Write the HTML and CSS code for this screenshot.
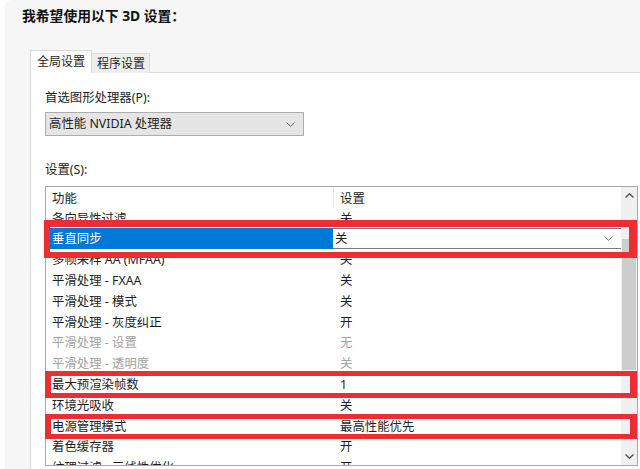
FILE: index.html
```html
<!DOCTYPE html>
<html lang="zh-CN">
<head>
<meta charset="utf-8">
<link rel="stylesheet" href="styles.css">
</head>
<body>
<div class="window">
  <div class="title">我希望使用以下 3D 设置：</div>
  <div class="tabs">
    <div class="tab active">全局设置</div>
    <div class="tab">程序设置</div>
  </div>
  <div class="panel">
    <div class="label first">首选图形处理器(P):</div>
    <div class="select">
      <span>高性能 NVIDIA 处理器</span>
      <svg class="chev" width="9" height="5" viewBox="0 0 9 5"><path d="M0.5 0.5 L4.5 4.3 L8.5 0.5" fill="none" stroke="#606060" stroke-width="1"/></svg>
    </div>
    <div class="label second">设置(S):</div>
    <div class="list-wrap">
      <div class="list">
        <div class="grid">
          <div class="row head"><div class="c1">功能</div><div class="c2">设置</div></div>
          <div class="row"><div class="c1">各向异性过滤</div><div class="c2">关</div></div>
          <div class="row selected">
            <div class="c1">垂直同步</div>
            <div class="c2 combo"><span>关</span>
              <svg class="chev" width="9" height="5" viewBox="0 0 9 5"><path d="M0.5 0.5 L4.5 4.3 L8.5 0.5" fill="none" stroke="#707070" stroke-width="1"/></svg>
            </div>
          </div>
          <div class="row"><div class="c1">多帧采样 AA (MFAA)</div><div class="c2">关</div></div>
          <div class="row"><div class="c1">平滑处理 - FXAA</div><div class="c2">关</div></div>
          <div class="row"><div class="c1">平滑处理 - 模式</div><div class="c2">关</div></div>
          <div class="row"><div class="c1">平滑处理 - 灰度纠正</div><div class="c2">开</div></div>
          <div class="row dim"><div class="c1">平滑处理 - 设置</div><div class="c2">无</div></div>
          <div class="row dim"><div class="c1">平滑处理 - 透明度</div><div class="c2">关</div></div>
          <div class="row"><div class="c1">最大预渲染帧数</div><div class="c2">1</div></div>
          <div class="row"><div class="c1">环境光吸收</div><div class="c2">关</div></div>
          <div class="row"><div class="c1">电源管理模式</div><div class="c2">最高性能优先</div></div>
          <div class="row"><div class="c1">着色缓存器</div><div class="c2">开</div></div>
          <div class="row"><div class="c1">纹理过滤 - 三线性优化</div><div class="c2">开</div></div>
        </div>
        <div class="scrollbar">
          <div class="arrow">
            <svg width="9" height="5" viewBox="0 0 9 5"><path d="M0.5 4.5 L4.5 0.7 L8.5 4.5" fill="none" stroke="#505050" stroke-width="1.3"/></svg>
          </div>
          <div class="gap"></div>
          <div class="thumb"></div>
          <div class="track"></div>
          <div class="arrow">
            <svg width="9" height="5" viewBox="0 0 9 5"><path d="M0.5 0.5 L4.5 4.3 L8.5 0.5" fill="none" stroke="#505050" stroke-width="1.3"/></svg>
          </div>
        </div>
      </div>
      <div class="mark m1"></div>
      <div class="mark m2"></div>
      <div class="mark m3"></div>
    </div>
  </div>
</div>
</body>
</html>
```

FILE: styles.css
```css
html, body {
  margin: 0;
  padding: 0;
}
body {
  background: #fdfdfd;
  font-family: "Noto Sans", "Noto Sans CJK SC", sans-serif;
  font-size: 12.4px;
  color: #1e1e1e;
  width: 640px;
  height: 469px;
  overflow: hidden;
}
.window {
  margin-left: 5px;
  height: 469px;
  background: #f6f6f6;
  border-top-left-radius: 7px;
  padding-top: 8px;
  box-sizing: border-box;
  display: flex;
  flex-direction: column;
}
.title {
  padding-left: 17px;
  font-size: 13.8px;
  font-weight: bold;
  line-height: 16px;
  color: #111;
}
.tabs {
  margin-top: 26px;
  margin-left: 25px;
  display: flex;
  align-items: flex-end;
  margin-bottom: -1px;
}
.tab {
  position: relative;
  height: 20px;
  line-height: 19px;
  box-sizing: border-box;
  padding: 0 4px 0 5px;
  background: #eeeeee;
  border: 1px solid #d9d9d9;
  border-left: none;
  border-bottom: none;
  color: #1e1e1e;
  font-size: 12px;
}
.tab.active {
  height: 23px;
  line-height: 22px;
  padding: 0 6px;
  background: #ffffff;
  border-left: 1px solid #d9d9d9;
  z-index: 1;
}
.panel {
  flex: 1;
  margin-left: 25px;
  background: #ffffff;
  border-top: 1px solid #d9d9d9;
  border-left: 1px solid #d9d9d9;
  padding-left: 14px;
}
.label {
  line-height: 16px;
  height: 16px;
}
.label.first {
  margin-top: 17px;
}
.label.second {
  margin-top: 26px;
}
.select {
  margin-top: 6px;
  width: 259px;
  height: 24px;
  box-sizing: border-box;
  border: 1px solid #adadad;
  background: #e5e5e5;
  padding: 0 8px 0 3px;
  display: flex;
  align-items: center;
  justify-content: space-between;
  line-height: 22px;
}
.chev {
  display: block;
}
.list-wrap {
  position: relative;
  margin-top: 8px;
  width: 593px;
}
.list {
  width: 593px;
  height: 280px;
  box-sizing: border-box;
  border: 1px solid #a8a8a8;
  background: #ffffff;
  display: flex;
  overflow: hidden;
}
.grid {
  flex: 1;
  overflow: hidden;
}
.row {
  display: flex;
  height: 20.8px;
  line-height: 21.4px;
  white-space: nowrap;
}
.row.head {
  height: 20.6px;
  line-height: 23px;
}
.c1 {
  width: 287px;
  flex: none;
  box-sizing: border-box;
  padding-left: 6px;
}
.c2 {
  flex: 1;
  padding-left: 7px;
}
.row.head .c2 {
  border-left: 1px solid #e6e6e6;
  padding-left: 6px;
}
.row.dim {
  color: #a3a3a3;
}
.row.selected .c1 {
  background: #0078d7;
  color: #ffffff;
}
.row.selected .combo {
  padding: 0 9px 0 2px;
  border-top: 1px solid #7a7a7a;
  border-bottom: 1px solid #7a7a7a;
  box-sizing: border-box;
  display: flex;
  align-items: center;
  justify-content: space-between;
  line-height: 18px;
  margin-right: -1px;
}
.scrollbar {
  width: 16px;
  flex: none;
  background: #f0f0f0;
  display: flex;
  flex-direction: column;
}
.arrow {
  height: 17px;
  display: flex;
  align-items: center;
  justify-content: center;
  flex: none;
}
.scrollbar .gap {
  height: 35px;
  flex: none;
}
.thumb {
  height: 131px;
  flex: none;
  background: #cdcdcd;
  margin: 0 1px 0 1px;
}
.track {
  flex: 1;
}
.mark {
  position: absolute;
  box-sizing: border-box;
  border: 6px solid #ec2d34;
  pointer-events: none;
}
.m1 {
  left: -1px;
  top: 34px;
  width: 593px;
  height: 38px;
  border-width: 7px 8px 6px 6px;
}
.m2 {
  left: 0;
  top: 185px;
  width: 592px;
  height: 27px;
  border-width: 5px 7px 5px 6px;
}
.m3 {
  left: 0;
  top: 228px;
  width: 592px;
  height: 25px;
  border-width: 5px 7px 5px 6px;
}
```
